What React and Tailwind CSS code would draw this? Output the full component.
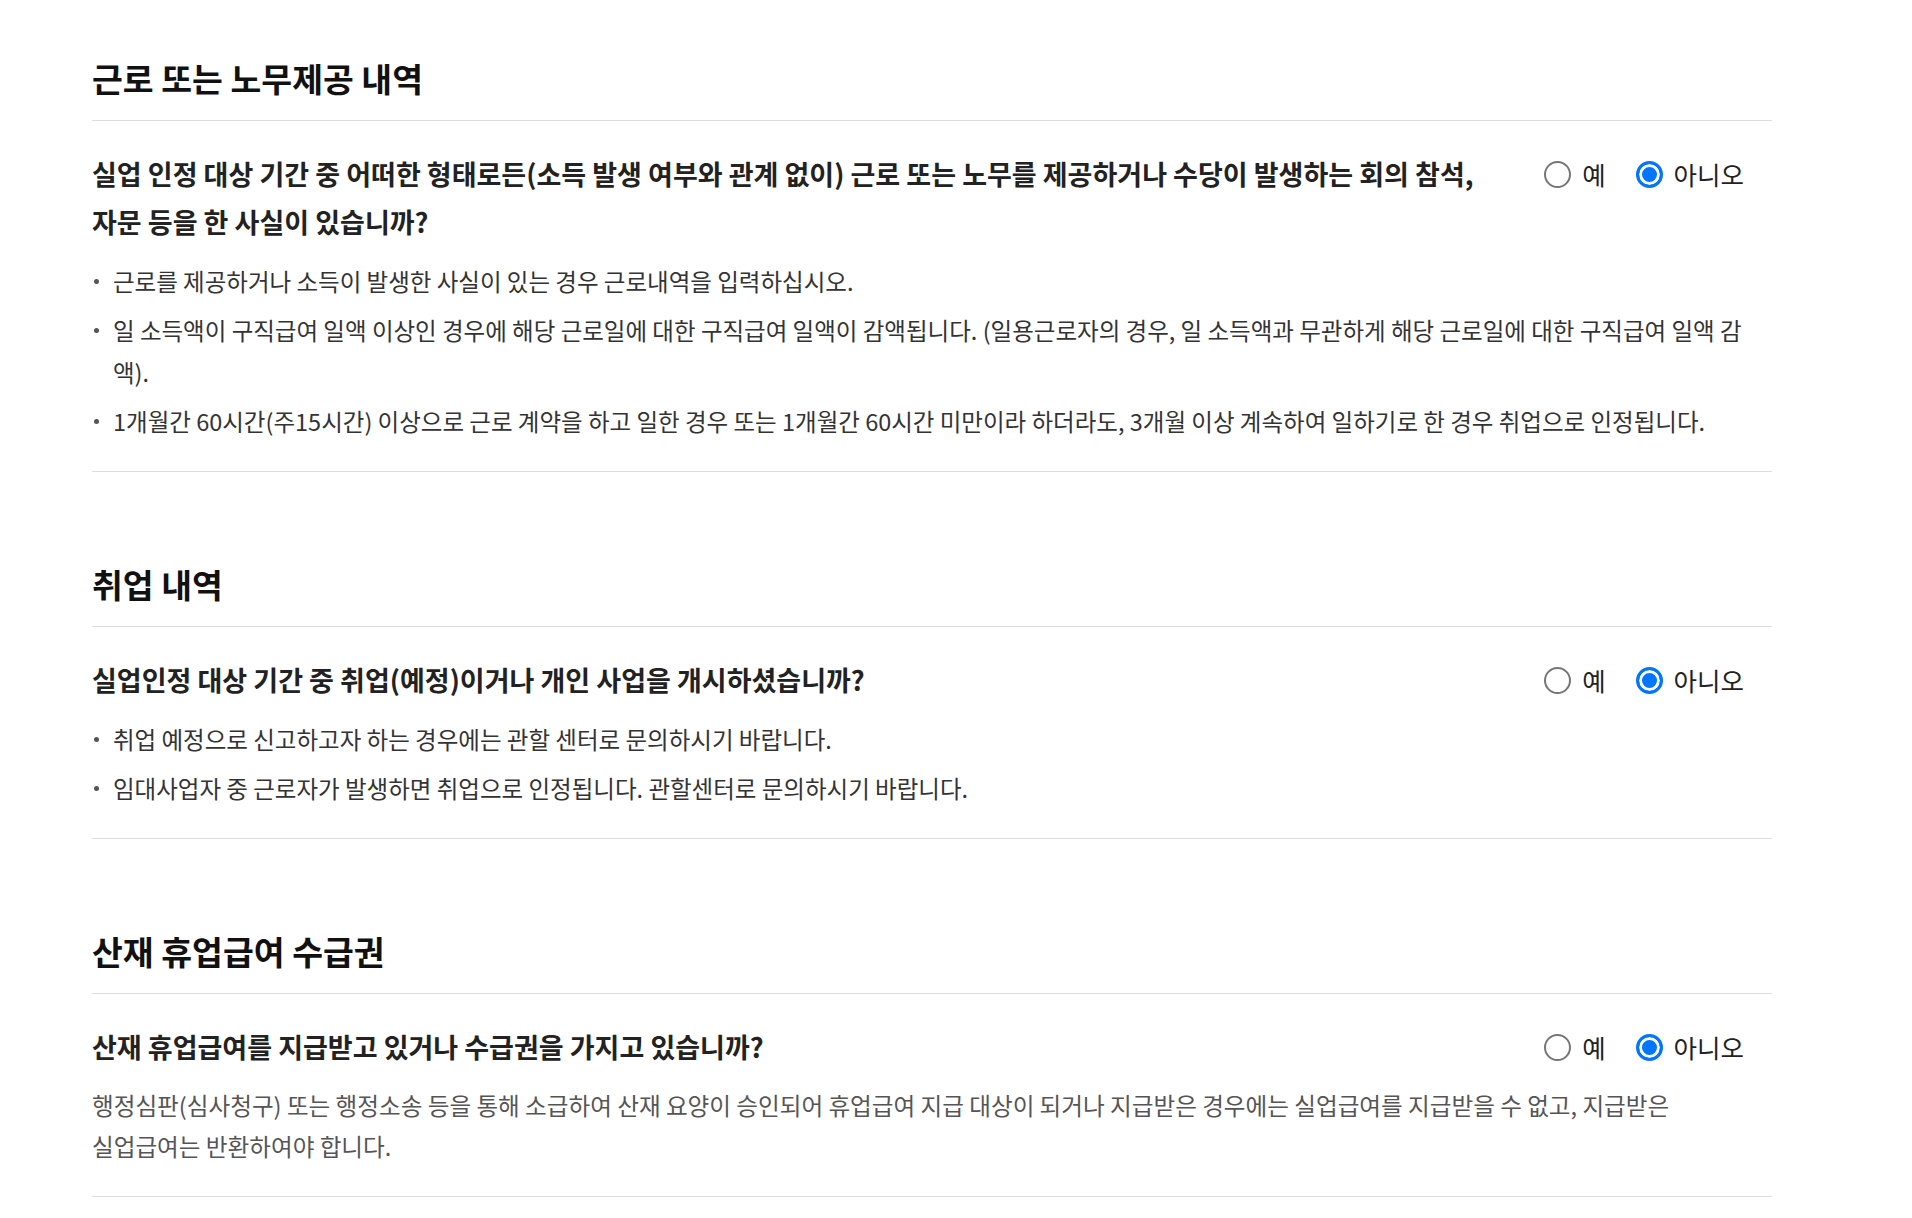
import { useState } from 'react';

const FONT = { fontFamily: '"Noto Sans CJK KR", "Noto Sans", sans-serif' };

const sections = [
  {
    title: '근로 또는 노무제공 내역',
    question:
      '실업 인정 대상 기간 중 어떠한 형태로든(소득 발생 여부와 관계 없이) 근로 또는 노무를 제공하거나 수당이 발생하는 회의 참석, 자문 등을 한 사실이 있습니까?',
    bullets: [
      '근로를 제공하거나 소득이 발생한 사실이 있는 경우 근로내역을 입력하십시오.',
      '일 소득액이 구직급여 일액 이상인 경우에 해당 근로일에 대한 구직급여 일액이 감액됩니다. (일용근로자의 경우, 일 소득액과 무관하게 해당 근로일에 대한 구직급여 일액 감액).',
      '1개월간 60시간(주15시간) 이상으로 근로 계약을 하고 일한 경우 또는 1개월간 60시간 미만이라 하더라도, 3개월 이상 계속하여 일하기로 한 경우 취업으로 인정됩니다.',
    ],
  },
  {
    title: '취업 내역',
    question: '실업인정 대상 기간 중 취업(예정)이거나 개인 사업을 개시하셨습니까?',
    bullets: [
      '취업 예정으로 신고하고자 하는 경우에는 관할 센터로 문의하시기 바랍니다.',
      '임대사업자 중 근로자가 발생하면 취업으로 인정됩니다. 관할센터로 문의하시기 바랍니다.',
    ],
  },
  {
    title: '산재 휴업급여 수급권',
    question: '산재 휴업급여를 지급받고 있거나 수급권을 가지고 있습니까?',
    desc: '행정심판(심사청구) 또는 행정소송 등을 통해 소급하여 산재 요양이 승인되어 휴업급여 지급 대상이 되거나 지급받은 경우에는 실업급여를 지급받을 수 없고, 지급받은 실업급여는 반환하여야 합니다.',
  },
];

function Radio({ name, label, checked, onChange }) {
  return (
    <label className="flex items-center gap-[11px] cursor-pointer">
      <input
        type="radio"
        name={name}
        checked={checked}
        onChange={onChange}
        className="appearance-none w-[27px] h-[27px] rounded-full border-2 border-[#767676] bg-white checked:border-[3px] checked:border-[#0075ff] checked:bg-[#0075ff] checked:shadow-[inset_0_0_0_3px_#fff] m-0"
      />
      <span className="text-[25.5px] leading-none text-[#222]">{label}</span>
    </label>
  );
}

function Section({ idx, title, question, bullets, desc }) {
  const [value, setValue] = useState('no');
  return (
    <section className={idx === 0 ? '' : 'mt-[90px]'}>
      <h2 className="text-[33.5px] leading-[44px] font-bold text-[#111] pb-[20px] border-b border-[#dddddd]">
        {title}
      </h2>
      <div className="pt-[29px] pb-[29px] border-b border-[#dddddd]">
        <div className="flex items-start justify-between">
          <p className="w-[1410px] text-[27px] leading-[48px] font-bold text-[#222]">{question}</p>
          <div className="flex items-center gap-[30px] h-[48px] pr-[28px]">
            <Radio name={'q' + idx} label="예" checked={value === 'yes'} onChange={() => setValue('yes')} />
            <Radio name={'q' + idx} label="아니오" checked={value === 'no'} onChange={() => setValue('no')} />
          </div>
        </div>
        {bullets && (
          <ul className="mt-[14px] flex flex-col gap-[7px]">
            {bullets.map((b) => (
              <li key={b} className="flex text-[23.5px] leading-[42px] text-[#333]">
                <span className="w-[21px] shrink-0 flex justify-start pt-[19px] pl-[2px]">
                  <span className="block w-[5px] h-[5px] rounded-full bg-[#555]" />
                </span>
                <span>{b}</span>
              </li>
            ))}
          </ul>
        )}
        {desc && (
          <p className="mt-[14px] text-[23.6px] leading-[41px] text-[#555] break-keep">{desc}</p>
        )}
      </div>
    </section>
  );
}

export default function App() {
  return (
    <main className="bg-white min-h-screen pt-[56px] pb-[40px]" style={FONT}>
      <div className="ml-[92px] w-[1680px]">
        {sections.map((s, i) => (
          <Section key={s.title} idx={i} {...s} />
        ))}
      </div>
    </main>
  );
}
